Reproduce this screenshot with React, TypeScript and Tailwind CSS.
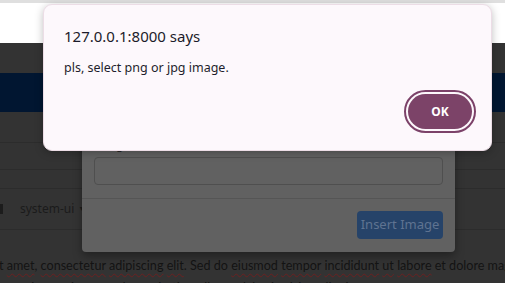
import React from "react";

const sq = "underline decoration-wavy decoration-[#6a2020] decoration-1 underline-offset-[3px]";

export default function App() {
  return (
    <div className="relative w-[505px] h-[283px] overflow-hidden bg-[#333333] font-['Noto_Sans',sans-serif]">
      {/* underlying page */}
      <div className="h-[3px] bg-[#dfdfdf]" />
      <div className="h-[40px] bg-white" />
      <div className="h-[30px] bg-[#333333]" />
      <div className="h-[39px] bg-[#011631]" />
      <div className="h-[31px] border-b border-[#2c2c2c]" />
      <div className="h-[27px] border-b border-[#2c2c2c]" />
      <div className="h-[19px] border-b border-[#2c2c2c]" />
      <div className="h-[41px] border-b border-[#2c2c2c] flex items-center">
        <div className="w-[3px] h-[10px] bg-[#1c1c1c]" />
        <div className="ml-[17px] flex items-center gap-[4px] text-[12px] text-[#1b1b1b]">
          <span>system-ui</span>
          <span className="text-[7px]">▼</span>
        </div>
      </div>
      <div className="pt-[25px] text-[12.6px] leading-[22px] text-[#141414] whitespace-nowrap font-['Lato',sans-serif]">
        <div className="-ml-[1px]">
          t <span className={sq}>amet</span>, <span className={sq}>consectetur</span>{" "}
          <span className={sq}>adipiscing</span> <span className={sq}>elit</span>. Sed do{" "}
          <span className={sq}>eiusmod</span> <span className={sq}>tempor</span>{" "}
          <span className={sq}>incididunt</span> <span className={sq}>ut</span>{" "}
          <span className={sq}>labore</span> et dolore magna aliqua.
        </div>
        <div className="-ml-[2px]">
          m <span className={sq}>veniam</span>, quis <span className={sq}>nostrud</span> exercitation ullamco laboris nisi ut aliquip ex ea
        </div>
      </div>

      {/* dimmed bootstrap modal */}
      <div className="absolute left-[82px] top-[40px] w-[373px] h-[212px] bg-[#616161] rounded-[4px] shadow-[0_4px_10px_rgba(0,0,0,0.35)] flex flex-col justify-end">
        <div className="px-[12px]">
          <div className="text-[12px] leading-[16px] text-[#262626]">Image URL</div>
          <div className="mt-[4px] h-[28px] rounded-[4px] border border-[#4f4f4f]" />
        </div>
        <div className="mt-[13px] border-t border-[#555555] pt-[12px] pb-[13px] px-[12px] flex justify-end">
          <div className="w-[86px] h-[28px] rounded-[4px] bg-[#264369] flex items-center justify-center text-[13px] text-[#5f7391]">
            Insert Image
          </div>
        </div>
      </div>

      {/* browser alert */}
      <div className="absolute left-[43px] top-[4px] w-[449px] h-[147px] rounded-[9px] bg-[#fdf8fc] border border-[#ecdde6] shadow-[0_2px_8px_rgba(0,0,0,0.25)] flex flex-col px-[20px] pt-[21px] pb-[17px]">
        <div className="text-[15px] leading-[20px] text-[#1c1b2a]">127.0.0.1:8000 says</div>
        <div className="mt-[13px] text-[12.5px] leading-[18px] text-[#1f1e2c]">pls, select png or jpg image.</div>
        <div className="mt-auto flex justify-end -mr-[5px]">
          <div className="w-[72px] h-[43px] rounded-full border-2 border-[#7c4269] p-[2px] bg-[#fdf8fc]">
            <div className="w-full h-full rounded-full bg-[#7c4368] flex items-center justify-center text-[12px] font-bold text-white">
              OK
            </div>
          </div>
        </div>
      </div>
    </div>
  );
}
